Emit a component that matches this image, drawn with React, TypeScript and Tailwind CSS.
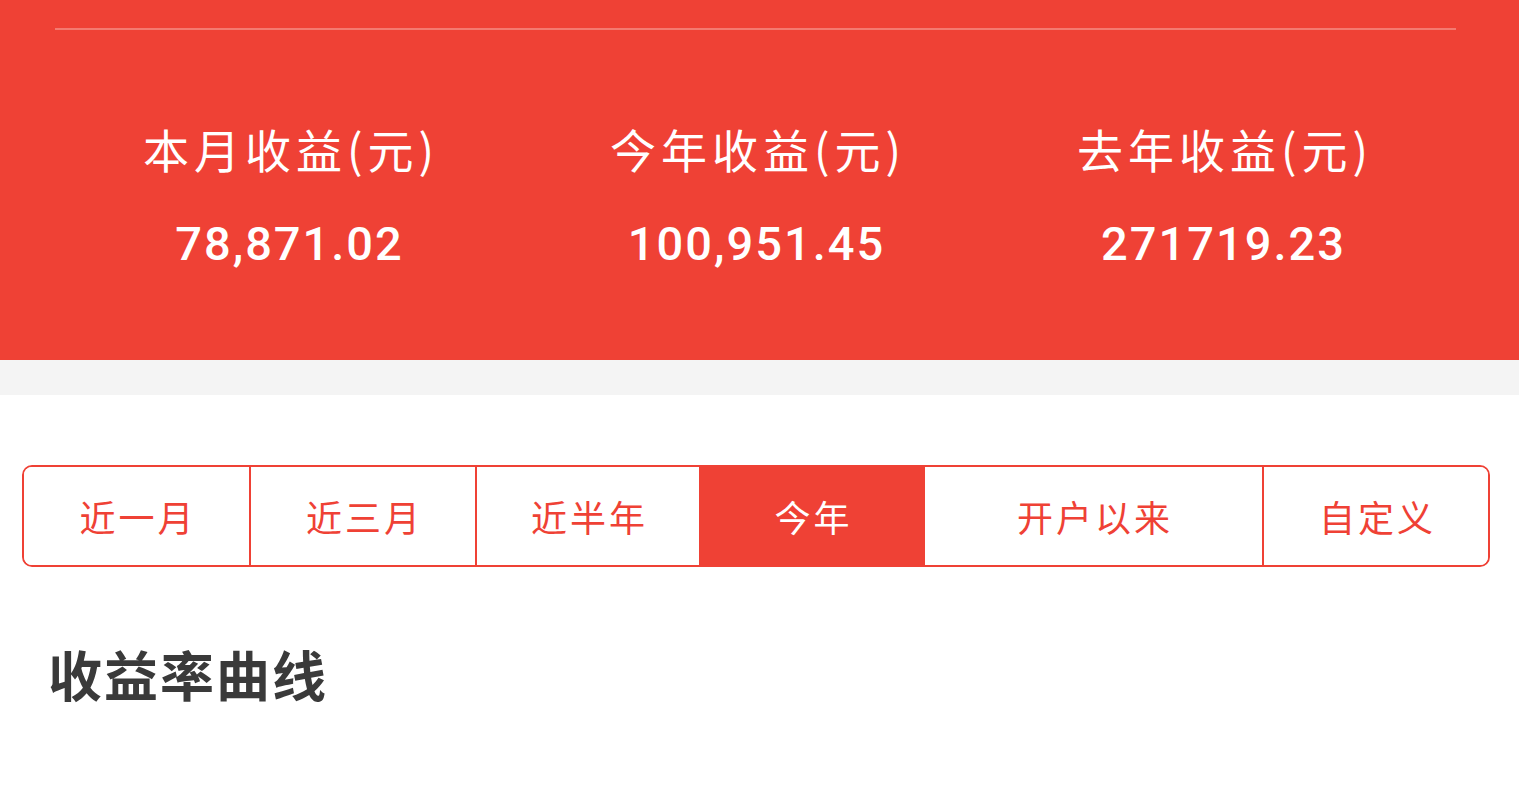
const stats = [
  { label: "本月收益(元)", value: "78,871.02" },
  { label: "今年收益(元)", value: "100,951.45" },
  { label: "去年收益(元)", value: "271719.23" },
];

const tabs = [
  { name: "近一月", w: "w-[225px]" },
  { name: "近三月", w: "w-[226px]" },
  { name: "近半年", w: "w-[224px]" },
  { name: "今年", w: "w-[224px]" },
  { name: "开户以来", w: "w-[339px]" },
  { name: "自定义", w: "flex-1" },
];

const App = () => {
  const active = "今年";
  return (
    <div
      className="w-[1519px] h-[787px] overflow-hidden bg-white"
      style={{ fontFamily: '"Noto Sans CJK SC", "Noto Sans", sans-serif' }}
    >
      <div className="bg-[#ef4135] h-[360px] pl-[55px] pr-[63px] pt-[28px]">
        <div className="h-[2px] bg-[#f47a70]" />
        <div className="grid grid-cols-3 mt-[88px]">
          {stats.map((s) => (
            <div key={s.label} className="flex flex-col items-center text-white">
              <p className="text-[46px] leading-[60px] tracking-[5px] pl-[5px]">{s.label}</p>
              <p
                className="text-[47px] leading-[60px] font-[500] mt-[36px] tracking-[2px] pl-[2px]"
                style={{ fontFamily: "Roboto, sans-serif" }}
              >
                {s.value}
              </p>
            </div>
          ))}
        </div>
      </div>
      <div className="h-[35px] bg-[#f4f4f4]" />
      <div className="px-[22px] pt-[70px]">
        <div className="flex h-[102px] w-[1468px] border-[2px] border-[#ef4135] rounded-[10px] overflow-hidden">
          {tabs.map((t, i) => (
            <div
              key={t.name}
              className={`${t.w} flex items-center justify-center text-[36px] tracking-[3px] pl-[3px] ${
                i > 0 ? "border-l-[2px] border-[#ef4135]" : ""
              } ${
                t.name === active
                  ? "bg-[#ef4135] text-white"
                  : "bg-white text-[#ef4135]"
              }`}
            >
              {t.name}
            </div>
          ))}
        </div>
        <p className="mt-[72px] ml-[26px] text-[54px] leading-[70px] font-[700] text-[#3a3a3a] tracking-[2px]">
          收益率曲线
        </p>
      </div>
    </div>
  );
};

export default App;
